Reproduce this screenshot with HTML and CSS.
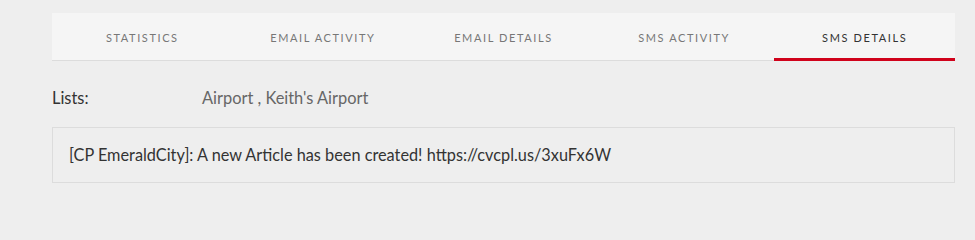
FILE: index.html
```html
<!DOCTYPE html>
<html>
<head>
<meta charset="utf-8">
<link rel="stylesheet" href="styles.css">
</head>
<body>
<div class="page">
  <nav class="tabs">
    <div class="tab">Statistics</div>
    <div class="tab">Email Activity</div>
    <div class="tab">Email Details</div>
    <div class="tab">SMS Activity</div>
    <div class="tab active">SMS Details</div>
  </nav>
  <div class="lists">
    <span class="label">Lists:</span>
    <span class="value">Airport , Keith's Airport</span>
  </div>
  <div class="message">[CP EmeraldCity]: A new Article has been created! https://cvcpl.us/3xuFx6W</div>
</div>
</body>
</html>
```

FILE: styles.css
```css
html, body {
  margin: 0;
  padding: 0;
  background: #eeeeee;
}
body {
  font-family: Lato, "Open Sans", Arial, sans-serif;
}
.page {
  padding: 13px 20px 0 52px;
}
.tabs {
  display: flex;
  background: #f5f5f5;
  border-bottom: 1px solid #dcdcdc;
  height: 47px;
}
.tab {
  flex: 1;
  display: flex;
  align-items: center;
  justify-content: center;
  font-size: 11px;
  letter-spacing: 1.6px;
  text-transform: uppercase;
  color: #777;
  box-sizing: border-box;
  padding-top: 2px;
}
.tab.active {
  color: #333;
  border-bottom: 3px solid #d0021b;
  margin-bottom: -1px;
  padding-top: 3px;
}
.lists {
  display: flex;
  align-items: baseline;
  margin-top: 28px;
  font-size: 16.4px;
  line-height: 18px;
  height: 18px;
}
.label {
  color: #333;
  width: 150px;
}
.value {
  color: #666;
}
.message {
  margin-top: 20px;
  border: 1px solid #dcdcdc;
  padding: 18px 16px 18px;
  font-size: 16.3px;
  color: #333;
  line-height: 18px;
}
```
